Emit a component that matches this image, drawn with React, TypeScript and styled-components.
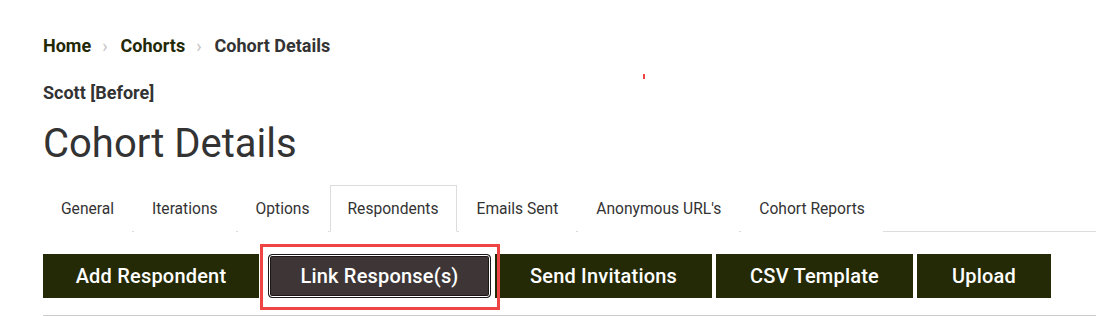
import styled, { createGlobalStyle } from "styled-components";

const GlobalStyle = createGlobalStyle`
  html, body {
    margin: 0;
    padding: 0;
    background: #ffffff;
  }
  body {
    font-family: Roboto, "Liberation Sans", sans-serif;
    color: #333333;
  }
`;

const Page = styled.div`
  position: relative;
  width: 1096px;
  height: 316px;
  overflow: hidden;
  padding: 32px 0 0 43px;
  box-sizing: border-box;
`;

const Breadcrumb = styled.ol`
  display: flex;
  align-items: center;
  list-style: none;
  margin: 0;
  padding: 0;
  height: 26px;
  font-size: 18px;
  font-weight: 700;
`;

const Crumb = styled.li<{ $active?: boolean }>`
  color: ${(p) => (p.$active ? "#333333" : "#232805")};

  &:not(:first-child)::before {
    content: "›";
    color: #c4c4c4;
    font-weight: 400;
    padding: 0 13px 0 11px;
  }
`;

const Subtitle = styled.div`
  margin-top: 22px;
  height: 26px;
  line-height: 26px;
  font-size: 18px;
  font-weight: 700;
  color: #333333;
`;

const Title = styled.h1`
  margin: 14px 0 0;
  font-size: 40px;
  font-weight: 400;
  line-height: 48px;
  color: #333333;
`;

const Tabs = styled.ul`
  display: flex;
  list-style: none;
  margin: 17px 0 0;
  padding: 0;
  border-bottom: 1px solid #dddddd;
`;

const Tab = styled.li<{ $active?: boolean }>`
  margin-right: 2px;
  margin-bottom: -1px;
  padding: 12px 17px 11px;
  font-size: 15.6px;
  line-height: 22px;
  color: #333333;
  background: #ffffff;
  border: 1px solid ${(p) => (p.$active ? "#dddddd" : "transparent")};
  border-bottom-color: ${(p) => (p.$active ? "#ffffff" : "transparent")};
`;

const Actions = styled.div`
  display: flex;
  align-items: flex-start;
  gap: 4px;
  margin-top: 22px;
  padding-bottom: 17px;
  border-bottom: 1px solid #cccccc;
`;

const ActionButton = styled.button<{ $width: number }>`
  width: ${(p) => p.$width}px;
  height: 44px;
  padding: 0;
  border: none;
  background: #252a06;
  color: #ffffff;
  font-family: Roboto, "Liberation Sans", sans-serif;
  font-size: 20px;
  font-weight: 500;
  letter-spacing: 0.2px;
  cursor: pointer;
`;

const FocusedSlot = styled.div`
  position: relative;
  margin-left: 5px;
`;

const FocusedButton = styled(ActionButton)`
  display: block;
  background: #3e3636;
  border: 1px solid #1c1616;
  border-radius: 4px;
  box-shadow: inset 0 0 0 1px #ffffff, inset 0 0 0 2px #1c1616;
`;

const Highlight = styled.div`
  position: absolute;
  left: -8px;
  top: -10px;
  width: 240px;
  height: 66px;
  border: 3px solid #ef4444;
  box-sizing: border-box;
  pointer-events: none;
`;

const Speck = styled.span`
  position: absolute;
  left: 643px;
  top: 74px;
  width: 2px;
  height: 5px;
  background: #ef4444;
`;

export default function App() {
  const tabs = [
    "General",
    "Iterations",
    "Options",
    "Respondents",
    "Emails Sent",
    "Anonymous URL's",
    "Cohort Reports",
  ];

  return (
    <Page>
      <GlobalStyle />
      <Breadcrumb>
        <Crumb>Home</Crumb>
        <Crumb>Cohorts</Crumb>
        <Crumb $active>Cohort Details</Crumb>
      </Breadcrumb>
      <Subtitle>Scott [Before]</Subtitle>
      <Speck />
      <Title>Cohort Details</Title>
      <Tabs>
        {tabs.map((t) => (
          <Tab key={t} $active={t === "Respondents"}>
            {t}
          </Tab>
        ))}
      </Tabs>
      <Actions>
        <ActionButton $width={216}>Add Respondent</ActionButton>
        <FocusedSlot>
          <FocusedButton $width={223}>Link Response(s)</FocusedButton>
          <Highlight />
        </FocusedSlot>
        <ActionButton $width={217}>Send Invitations</ActionButton>
        <ActionButton $width={197}>CSV Template</ActionButton>
        <ActionButton $width={134}>Upload</ActionButton>
      </Actions>
    </Page>
  );
}
